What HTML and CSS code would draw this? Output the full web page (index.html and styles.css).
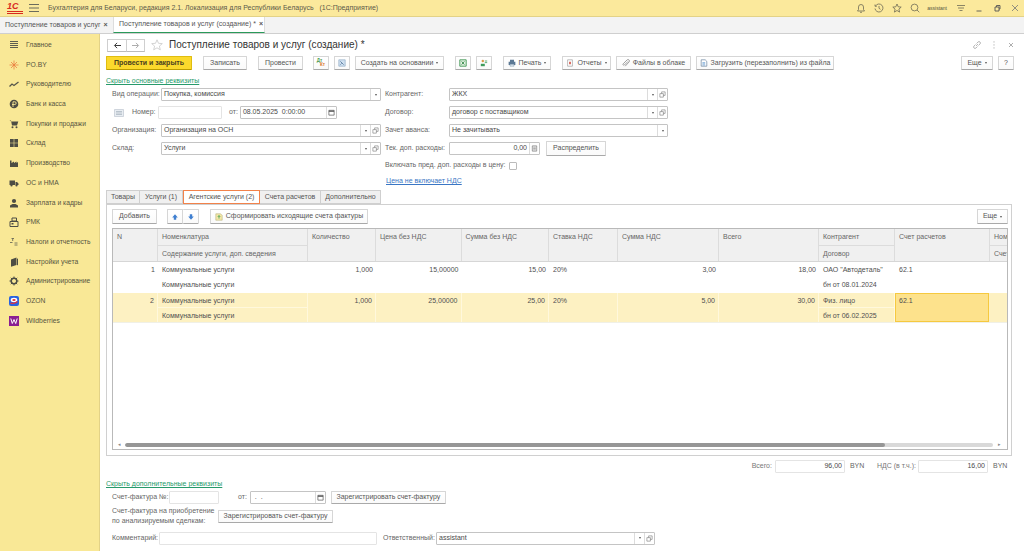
FILE: index.html
```html
<!DOCTYPE html>
<html lang="ru">
<head>
<meta charset="utf-8">
<title>Поступление товаров и услуг (создание)</title>
<link rel="stylesheet" href="styles.css">
</head>
<body>
<div class="app">
  <header class="topbar">
    <span class="logo">1С</span>
    <svg class="ic burger" viewBox="0 0 10 8"><path d="M0 .5h10M0 4h10M0 7.500h10" stroke="#6b6b5c"/></svg>
    <span class="apptitle">Бухгалтерия для Беларуси, редакция 2.1. Локализация для Республики Беларусь &nbsp; (1С:Предприятие)</span>
    <div class="topright">
      <svg class="ic" viewBox="0 0 10 10"><path d="M1.500 8h7L7.500 6.500V4a2.500 2.500 0 0 0-5 0v2.500zM4 9.300h2" fill="none" stroke="#6e6b55" stroke-width=".8"/></svg>
      <svg class="ic" viewBox="0 0 10 10"><path d="M1.500 3A4 4 0 1 1 1 5.500M1 1.500V3.300h1.800M5 3v2.300l1.500 1" fill="none" stroke="#6e6b55" stroke-width=".8"/></svg>
      <svg class="ic" viewBox="0 0 10 10"><path d="M5 1l1.200 2.800 3 .3-2.300 2 .7 3L5 7.500 2.400 9.100l.7-3-2.300-2 3-.3z" fill="none" stroke="#6e6b55" stroke-width=".8"/></svg>
      <svg class="ic" viewBox="0 0 10 10"><circle cx="4.500" cy="4.500" r="3.400" fill="none" stroke="#6e6b55" stroke-width=".8"/><path d="M7 7l2.300 2.300" stroke="#6e6b55" stroke-width=".8"/></svg>
      <span class="user">assistant</span>
      <svg class="ic" viewBox="0 0 10 10"><path d="M1 2.500h8M2 5h6M3.500 7.500h3" stroke="#6e6b55" stroke-width=".8"/></svg>
      <svg class="ic" viewBox="0 0 10 10"><path d="M2.500 8h5" stroke="#555" stroke-width=".9"/></svg>
      <svg class="ic" viewBox="0 0 10 10"><path d="M3 4h4v4H3zM4.500 4V2.500h3.500V6H7" fill="none" stroke="#555" stroke-width=".9"/></svg>
      <svg class="ic" viewBox="0 0 10 10"><path d="M2 2l6 6M8 2l-6 6" stroke="#777" stroke-width=".8"/></svg>
    </div>
  </header>

  <nav class="opentabs">
    <div class="otab">Поступление товаров и услуг<b class="otx">×</b></div>
    <div class="otab cur">Поступление товаров и услуг (создание) *<b class="otx">×</b></div>
  </nav>

  <div class="body">
    <aside class="side">
      <a class="si"><svg class="sic" viewBox="0 0 10 10"><path d="M1 1.500h8M1 3.500h8M1 5.500h8M1 7.500h8" stroke="#5d5d50" stroke-width="1.200"/></svg>Главное</a>
      <a class="si"><svg class="sic" viewBox="0 0 10 10"><path d="M5 .5v9M.5 5h9M2 2l6 6M8 2L2 8" stroke="#e8763a" stroke-width=".7"/></svg>PO.BY</a>
      <a class="si"><svg class="sic" viewBox="0 0 10 10"><path d="M.5 7.500L3 5l2 1.500L9.500 3" fill="none" stroke="#55554a" stroke-width="1.300"/></svg>Руководителю</a>
      <a class="si"><svg class="sic" viewBox="0 0 10 10"><circle cx="5" cy="5" r="4.300" fill="#4d4d44"/><path d="M4 8V2.800h1.800a1.300 1.300 0 0 1 0 2.700H3" fill="none" stroke="#f9e896" stroke-width=".9"/></svg>Банк и касса</a>
      <a class="si"><svg class="sic" viewBox="0 0 10 10"><path d="M.5 1.500h1.500l1 5h5l1.300-4H2.300z" fill="#4d4d44"/><circle cx="3.500" cy="8.300" r="1" fill="#4d4d44"/><circle cx="7.500" cy="8.300" r="1" fill="#4d4d44"/></svg>Покупки и продажи</a>
      <a class="si"><svg class="sic" viewBox="0 0 10 10"><path d="M1 1h3.700v3.700H1zM5.300 1H9v3.700H5.300zM1 5.300h3.700V9H1zM5.300 5.300H9V9H5.300z" fill="#4d4d44"/></svg>Склад</a>
      <a class="si"><svg class="sic" viewBox="0 0 10 10"><path d="M1 9V2.500h1.500V5L5 3.500V5l2.500-1.500V5L9 4v5z" fill="#4d4d44"/></svg>Производство</a>
      <a class="si"><svg class="sic" viewBox="0 0 10 10"><path d="M.5 2.500h5.500v4.500H.5zM6.500 4H8l1.500 1.500V7h-3z" fill="#4d4d44"/><circle cx="2.500" cy="7.500" r="1.100" fill="#4d4d44"/><circle cx="7.500" cy="7.500" r="1.100" fill="#4d4d44"/></svg>ОС и НМА</a>
      <a class="si"><svg class="sic" viewBox="0 0 10 10"><circle cx="5" cy="3" r="2.100" fill="#4d4d44"/><path d="M1 9.500V7.500L3.500 6h3L9 7.500v2z" fill="#4d4d44"/></svg>Зарплата и кадры</a>
      <a class="si"><svg class="sic" viewBox="0 0 10 10"><path d="M1 4.500h8v5H1zM3 1h4.500v3H3z" fill="none" stroke="#4d4d44" stroke-width="1"/><path d="M2.500 6h2v1.500h-2z" fill="#4d4d44"/></svg>РМК</a>
      <a class="si"><svg class="sic" viewBox="0 0 10 10"><path d="M2.500 1.500h2.500M3.700 1.500v2.500M5.500 6h3M5.500 8h3M1 5.500h2.500" stroke="#5d5d50" stroke-width=".8"/></svg>Налоги и отчетность</a>
      <a class="si"><svg class="sic" viewBox="0 0 10 10"><path d="M2 2.500L7.500 .5V8L2 9.800zM8 1.500l1 .3v6l-1 .7z" fill="#4d4d44"/></svg>Настройки учета</a>
      <a class="si"><svg class="sic" viewBox="0 0 10 10"><circle cx="5" cy="5" r="2.800" fill="none" stroke="#4d4d44" stroke-width="1.500"/><path d="M5 .5v2M5 7.500v2M.5 5h2M7.500 5h2M1.800 1.800l1.400 1.400M6.800 6.800l1.400 1.400M8.200 1.800L6.800 3.200M3.200 6.800L1.800 8.200" stroke="#4d4d44" stroke-width="1"/></svg>Администрирование</a>
      <a class="si"><svg class="sic" viewBox="0 0 10 10"><rect width="10" height="10" rx="2" fill="#2a62e0"/><ellipse cx="5" cy="4" rx="3.300" ry="2.200" fill="#fff"/><path d="M1.500 6.800Q5 8.500 8.500 5.500" fill="none" stroke="#e0323c" stroke-width="1.400"/><ellipse cx="5" cy="4" rx="1.700" ry=".9" fill="#e0323c"/></svg>OZON</a>
      <a class="si"><svg class="sic" viewBox="0 0 10 10"><rect width="10" height="10" fill="#8a1f92"/><path d="M1.800 2.500L3.300 7.500 5 3.500 6.700 7.500 8.200 2.500" fill="none" stroke="#fff" stroke-width="1"/></svg>Wildberries</a>
    </aside>

    <main class="main">
      <div class="headrow">
        <div class="navbtns">
          <span class="navb"><svg class="ic8" viewBox="0 0 10 8"><path d="M9 4H2M4.500 1L1.500 4l3 3" fill="none" stroke="#333" stroke-width="1.100"/></svg></span>
          <span class="navb"><svg class="ic8" viewBox="0 0 10 8"><path d="M1 4h7M5.500 1l3 3-3 3" fill="none" stroke="#aaa" stroke-width="1.100"/></svg></span>
        </div>
        <svg class="star" viewBox="0 0 12 12"><path d="M6 .8l1.500 3.500 3.800.3-2.900 2.500.9 3.700L6 8.800l-3.300 2 .9-3.700L.7 4.600l3.800-.3z" fill="#fff" stroke="#c9c9c9" stroke-width=".8"/></svg>
        <h1 class="title">Поступление товаров и услуг (создание) *</h1>
        <div class="headicons">
          <svg class="ic" viewBox="0 0 10 10"><path d="M4 6l2-2M3.500 4.500L2 6a1.400 1.400 0 0 0 2 2l1.500-1.500M4.500 3.500L6 2a1.400 1.400 0 0 1 2 2L6.500 5.500" fill="none" stroke="#999" stroke-width=".7"/></svg>
          <svg class="ic" viewBox="0 0 10 10"><path d="M5 1.500v.9M5 4.500v.9M5 7.500v.9" stroke="#888" stroke-width=".9"/></svg>
          <svg class="ic" viewBox="0 0 10 10"><path d="M3 3l4 4M7 3L3 7" stroke="#999" stroke-width=".8"/></svg>
        </div>
      </div>

      <div class="toolbar">
        <button class="btn primary w86">Провести и закрыть</button>
        <button class="btn w44 g11">Записать</button>
        <button class="btn w45 g11">Провести</button>
        <button class="btn w16 g10"><span class="dtkt"><i>Дт</i><b>Кт</b></span></button>
        <button class="btn w16 g5"><svg class="ic" viewBox="0 0 10 10"><path d="M1 1h8v8H1z" fill="#cfe0f0" stroke="#7d9cbc" stroke-width=".7"/><path d="M3 3l4 4M3 7l1.500-1.500" stroke="#4a6d94"/></svg></button>
        <button class="btn w89 g5">Создать на основании<span class="caret"></span></button>
        <button class="btn w16 g11"><svg class="ic" viewBox="0 0 10 10"><path d="M1 1h8v8H1z" fill="#e4f3e4" stroke="#2d8a42"/><path d="M3.300 3l3.400 4M6.700 3L3.300 7" stroke="#1e7a35"/></svg></button>
        <button class="btn w16 g5"><svg class="ic" viewBox="0 0 10 10"><circle cx="3.500" cy="2.500" r="1.500" fill="#d69a4a"/><path d="M1 9V6h5v3z" fill="#3d9b5c"/><path d="M6 2.500h3M6 4.500h3" stroke="#3d9b5c"/></svg></button>
        <button class="btn w48 g11"><svg class="ic" viewBox="0 0 10 10"><path d="M2.500 1h5v2.500h-5zM.8 3.500h8.400v4H.8z" fill="#5b7894"/><path d="M2.500 6.500h5V9h-5z" fill="#dfe7ef" stroke="#5b7894" stroke-width=".5"/></svg>Печать<span class="caret"></span></button>
        <button class="btn w49 g11"><svg class="ic" viewBox="0 0 10 10"><path d="M2 1h6v8H2z" fill="#fff" stroke="#8a8a8a" stroke-width=".7"/><path d="M4 3.500h2v3H4z" fill="#d24a3c"/></svg>Отчеты<span class="caret"></span></button>
        <button class="btn w75 g5"><svg class="ic" viewBox="0 0 10 10"><path d="M7.500 2.500L3 7a1 1 0 0 1-1.500-1.500l5-5a1.800 1.800 0 0 1 2.500 2.500L4 8.500" fill="none" stroke="#888" stroke-width="1" transform="translate(0 .5)"/></svg>Файлы в облаке</button>
        <button class="btn w138 g5"><svg class="ic" viewBox="0 0 10 10"><path d="M1.500 1h5l2 2v6h-7z" fill="#fff" stroke="#5b7894" stroke-width=".8"/><path d="M3 4.500h3.500M3 6h3.500M3 7.500h3.500" stroke="#3a7fc4" stroke-width=".7"/></svg>Загрузить (перезаполнить) из файла</button>
        <button class="btn w32 push">Еще<span class="caret"></span></button>
        <button class="btn w16 g5">?</button>
      </div>

      <a class="link green hide1">Скрыть основные реквизиты</a>

      <section class="form">
        <div class="col left">
          <div class="row"><label class="lab w49">Вид операции:</label><div class="field grow"><span class="val">Покупка, комиссия</span><span class="fb"><span class="caret"></span></span></div></div>
          <div class="row">
            <svg class="docic" viewBox="0 0 10 8"><path d="M.5.500h9v7h-9z" fill="#e8edf2" stroke="#b5bfc9" stroke-width=".6"/><path d="M2 2.500h6M2 4h6M2 5.500h6" stroke="#9aa7b4" stroke-width=".6"/></svg>
            <label class="lab w26">Номер:</label><div class="field plain w64"></div>
            <label class="lab from">от:</label>
            <div class="field w97"><span class="val">08.05.2025 &nbsp;0:00:00</span><span class="fb"><svg class="ic7" viewBox="0 0 8 8"><path d="M1 1.500h6V7H1z" fill="none" stroke="#555" stroke-width=".8"/><path d="M1 2.500h6" stroke="#555" stroke-width="1.400"/></svg></span></div>
          </div>
          <div class="row"><label class="lab w49">Организация:</label><div class="field grow"><span class="val">Организация на ОСН</span><span class="fb"><span class="caret"></span></span><span class="fb"><svg class="ic7" viewBox="0 0 8 8"><path d="M1 3h4v4H1zM3 3V1h4v4H5" fill="none" stroke="#777" stroke-width=".7"/></svg></span></div></div>
          <div class="row"><label class="lab w49">Склад:</label><div class="field grow"><span class="val">Услуги</span><span class="fb"><span class="caret"></span></span><span class="fb"><svg class="ic7" viewBox="0 0 8 8"><path d="M1 3h4v4H1zM3 3V1h4v4H5" fill="none" stroke="#777" stroke-width=".7"/></svg></span></div></div>
        </div>
        <div class="col right">
          <div class="row"><label class="lab w64">Контрагент:</label><div class="field grow"><span class="val">ЖКХ</span><span class="fb"><span class="caret"></span></span><span class="fb"><svg class="ic7" viewBox="0 0 8 8"><path d="M1 3h4v4H1zM3 3V1h4v4H5" fill="none" stroke="#777" stroke-width=".7"/></svg></span></div></div>
          <div class="row"><label class="lab w64">Договор:</label><div class="field grow"><span class="val">договор с поставщиком</span><span class="fb"><span class="caret"></span></span><span class="fb"><svg class="ic7" viewBox="0 0 8 8"><path d="M1 3h4v4H1zM3 3V1h4v4H5" fill="none" stroke="#777" stroke-width=".7"/></svg></span></div></div>
          <div class="row"><label class="lab w64">Зачет аванса:</label><div class="field grow"><span class="val">Не зачитывать</span><span class="fb"><span class="caret"></span></span></div></div>
          <div class="row"><label class="lab w64">Тек. доп. расходы:</label><div class="field w91"><span class="val num">0,00</span><span class="fb"><svg class="ic7" viewBox="0 0 8 8"><path d="M1.500 1h5v6h-5z" fill="none" stroke="#666" stroke-width=".7"/><path d="M2.500 2.500h3M2.500 4h3M2.500 5.500h3" stroke="#666" stroke-width=".6"/></svg></span></div><button class="btn w60 dist">Распределить</button></div>
          <div class="row short"><label class="lab">Включать пред. доп. расходы в цену:</label><span class="check"></span></div>
          <div class="row short"><a class="link blue">Цена не включает НДС</a></div>
        </div>
      </section>

      <div class="tabs">
        <span class="tab w34">Товары</span>
        <span class="tab w43">Услуги (1)</span>
        <span class="tab active w77">Агентские услуги (2)</span>
        <span class="tab w61">Счета расчетов</span>
        <span class="tab w60">Дополнительно</span>
      </div>

      <section class="panel">
        <div class="ptools">
          <button class="btn w45">Добавить</button>
          <div class="pair g10">
            <button class="btn w16a"><svg class="ic" viewBox="0 0 10 10"><path d="M5 1.500L8.500 5.500H6.500V8.500h-3V5.500H1.500z" fill="#3f7fd0"/></svg></button>
            <button class="btn w16a"><svg class="ic" viewBox="0 0 10 10"><path d="M5 8.500L8.500 4.500H6.500V1.500h-3v3H1.500z" fill="#3f7fd0"/></svg></button>
          </div>
          <button class="btn w158 g11"><svg class="ic" viewBox="0 0 10 10"><path d="M1 1h6l2 2v6H1z" fill="#f4e8a8" stroke="#a8a26a" stroke-width=".6"/><path d="M5 7V4M3.500 5L5 3l1.500 2" fill="none" stroke="#3e9a4c"/></svg>Сформировать исходящие счета фактуры</button>
          <button class="btn w31 push">Еще<span class="caret"></span></button>
        </div>

        <div class="grid">
          <div class="gr head">
            <div class="c"><span class="l">N</span></div>
            <div class="c split"><span class="l">Номенклатура</span><span class="l">Содержание услуги, доп. сведения</span></div>
            <div class="c"><span class="l">Количество</span></div>
            <div class="c"><span class="l">Цена без НДС</span></div>
            <div class="c"><span class="l">Сумма без НДС</span></div>
            <div class="c"><span class="l">Ставка НДС</span></div>
            <div class="c"><span class="l">Сумма НДС</span></div>
            <div class="c"><span class="l">Всего</span></div>
            <div class="c split"><span class="l">Контрагент</span><span class="l">Договор</span></div>
            <div class="c"><span class="l">Счет расчетов</span></div>
            <div class="c split"><span class="l">Номер</span><span class="l">Счет</span></div>
          </div>
          <div class="gr data">
            <div class="c r"><span class="l">1</span></div>
            <div class="c"><span class="l">Коммунальные услуги</span><span class="l">Коммунальные услуги</span></div>
            <div class="c r"><span class="l">1,000</span></div>
            <div class="c r"><span class="l">15,00000</span></div>
            <div class="c r"><span class="l">15,00</span></div>
            <div class="c"><span class="l">20%</span></div>
            <div class="c r"><span class="l">3,00</span></div>
            <div class="c r"><span class="l">18,00</span></div>
            <div class="c"><span class="l">ОАО "Автодеталь"</span><span class="l">бн от 08.01.2024</span></div>
            <div class="c"><span class="l">62.1</span></div>
            <div class="c"></div>
          </div>
          <div class="gr data sel">
            <div class="c r"><span class="l">2</span></div>
            <div class="c split"><span class="l">Коммунальные услуги</span><span class="l">Коммунальные услуги</span></div>
            <div class="c r"><span class="l">1,000</span></div>
            <div class="c r"><span class="l">25,00000</span></div>
            <div class="c r"><span class="l">25,00</span></div>
            <div class="c"><span class="l">20%</span></div>
            <div class="c r"><span class="l">5,00</span></div>
            <div class="c r"><span class="l">30,00</span></div>
            <div class="c split"><span class="l">Физ. лицо</span><span class="l">бн от 06.02.2025</span></div>
            <div class="c cur"><span class="l">62.1</span></div>
            <div class="c split"></div>
          </div>
          <div class="gridfill"></div>
          <div class="hscroll">
            <span class="arrow">◂</span>
            <span class="track"><span class="thumb"></span></span>
            <span class="arrow">▸</span>
          </div>
        </div>
      </section>

      <div class="totals">
        <label class="lab">Всего:</label><div class="field plain w70"><span class="val num">96,00</span></div><span class="cur-code">BYN</span>
        <label class="lab vat">НДС (в т.ч.):</label><div class="field plain w70"><span class="val num">16,00</span></div><span class="cur-code">BYN</span>
      </div>

      <a class="link green hide2">Скрыть дополнительные реквизиты</a>

      <div class="frow r1">
        <label class="lab w57">Счет-фактура №:</label><div class="field plain w50"></div>
        <label class="lab from2">от:</label>
        <div class="field w76"><span class="val">&nbsp;. &nbsp;.</span><span class="fb"><svg class="ic7" viewBox="0 0 8 8"><path d="M1 1.500h6V7H1z" fill="none" stroke="#555" stroke-width=".8"/><path d="M1 2.500h6" stroke="#555" stroke-width="1.400"/></svg></span></div>
        <button class="btn w115 g5">Зарегистрировать счет-фактуру</button>
      </div>
      <div class="frow r2">
        <label class="lab w106">Счет-фактура на приобретение<br>по анализируемым сделкам:</label>
        <button class="btn w115">Зарегистрировать счет-фактуру</button>
      </div>
      <div class="frow r3">
        <label class="lab w47">Комментарий:</label><div class="field plain w218"></div>
        <label class="lab resp">Ответственный:</label>
        <div class="field w219"><span class="val">assistant</span><span class="fb"><span class="caret"></span></span><span class="fb"><svg class="ic7" viewBox="0 0 8 8"><path d="M1 3h4v4H1zM3 3V1h4v4H5" fill="none" stroke="#777" stroke-width=".7"/></svg></span></div>
      </div>
    </main>
  </div>
</div>
</body>
</html>
```
FILE: styles.css
```css
* { box-sizing: border-box; }
html, body { margin: 0; height: 100%; }
body { font: 7px/1.2 "Liberation Sans", Arial, sans-serif; color: #4a4a4a; background: #fff; overflow: hidden; }
button { font: inherit; color: #555; }
.app { height: 551px; display: flex; flex-direction: column; overflow: hidden; }

.ic { width: 8px; height: 8px; flex: none; }
.ic7 { width: 7px; height: 7px; display: block; }
.ic8 { width: 9px; height: 7px; display: block; }

.topbar { height: 17px; flex: none; display: flex; align-items: center; background: #fbe99c; border-bottom: 1px solid #e3d287; padding-left: 7px; }
.logo { font: italic bold 9px/9px "Liberation Sans", sans-serif; color: #d8291f; border-bottom: 3px double #d8291f; width: 16px; height: 12px; }
.burger { width: 10px; height: 8px; margin-left: 6px; }
.apptitle { margin-left: 9px; color: #5c5a4a; white-space: nowrap; }
.topright { margin-left: auto; display: flex; align-items: center; padding-right: 4px; }
.topright .ic { width: 10px; height: 10px; margin-left: 8px; }
.user { font-size: 5px; margin-left: 7px; margin-right: 1px; color: #55533f; }

.opentabs { height: 17px; flex: none; display: flex; background: #f3f3f3; border-bottom: 1px solid #cfcfcf; }
.otab { display: flex; align-items: center; padding-left: 5px; width: 113px; color: #555; white-space: nowrap; }
.otx { margin-left: 3px; font-size: 7px; color: #555; }
.otab.cur { width: 152px; background: #fff; padding-left: 5px; border-left: 1px solid #ddd; border-right: 1px solid #ddd; border-bottom: 1px solid #2a9a5a; height: 16px; }

.body { flex: 1; display: flex; min-height: 0; }
.side { width: 100px; flex: none; background: #f9e896; border-right: 1px solid #e3d287; padding-top: 1px; }
.si { display: flex; align-items: center; height: 19.72px; color: #57553f; padding-left: 9px; white-space: nowrap; font-size: 6.75px; }
.sic { width: 10px; height: 10px; margin-right: 7px; flex: none; }

.main { flex: 1; min-width: 0; display: flex; flex-direction: column; padding: 4px 10px 0 6px; }
.headrow { height: 14px; display: flex; align-items: center; }
.navbtns { display: flex; margin-left: 1px; }
.navb { width: 20px; height: 13px; border: 1px solid #cfcfcf; border-bottom-color: #bbb; display: flex; align-items: center; justify-content: center; background: #fff; }
.navb + .navb { margin-left: -1px; width: 19px; }
.star { width: 12px; height: 12px; margin-left: 6px; }
.title { font: 400 10px/14px "Liberation Sans", sans-serif; color: #333; margin: 0 0 0 6px; }
.headicons { margin-left: auto; display: flex; gap: 7px; margin-right: -2px; }
.headicons .ic { width: 10px; height: 10px; }

.toolbar { display: flex; height: 14px; margin-top: 4px; }
.btn { height: 14px; padding: 0; background: linear-gradient(#fff, #fafafa); border: 1px solid #d6d6d6; border-bottom: 1px solid #a9a9a9; border-radius: 1px; display: inline-flex; align-items: center; justify-content: center; gap: 3px; white-space: nowrap; flex: none; }
.primary { background: #fbd92c; border-color: #e0bd10; border-bottom-color: #bb9c00; color: #4a4120; font-weight: 700; }
.w16, .w16a { width: 16px; } .w31 { width: 31px; } .w32 { width: 32px; } .w44 { width: 44px; } .w45 { width: 45px; } .w48 { width: 48px; } .w49 { width: 49px; } .w60 { width: 60px; } .w75 { width: 75px; } .w86 { width: 86px; } .w89 { width: 89px; } .w115 { width: 115px; } .w138 { width: 138px; } .w158 { width: 158px; }
.g5 { margin-left: 5px; } .g10 { margin-left: 10px; } .g11 { margin-left: 11px; }
.push { margin-left: auto; }
.caret { width: 0; height: 0; border: 1.500px solid transparent; border-top: 2px solid #555; border-bottom: 0; flex: none; }
.dtkt { display: flex; flex-direction: column; font-size: 4.500px; line-height: 4.500px; font-weight: 700; }
.dtkt i { font-style: normal; color: #4c9a4c; margin-right: 3px; }
.dtkt b { color: #d9762a; margin-left: 3px; }

.link { text-decoration: underline; white-space: nowrap; display: block; }
.green { color: #279a6b; }
.blue { color: #3a76c4; margin-left: 1px; }
.hide1 { margin-top: 6px; height: 9px; line-height: 9px; }

.form { display: flex; margin-top: 3px; height: 101px; }
.col { display: flex; flex-direction: column; gap: 5px; }
.left { width: 269px; margin-left: 6px; }
.right { width: 283px; margin-left: 4px; }
.row { display: flex; align-items: center; height: 13px; }
.row.short { height: 11px; }
.lab { color: #666; white-space: nowrap; flex: none; }
.w26 { width: 26px; } .w47 { width: 47px; } .w49.lab { width: 49px; } .w57 { width: 57px; } .w64.lab { width: 64px; } .w106 { width: 106px; }
.field { height: 13px; border: 1px solid #c4c4c4; border-radius: 1px; background: #fff; display: flex; align-items: center; flex: none; overflow: hidden; }
.field.plain { border-color: #e4e4e4; }
.grow { flex: 1; min-width: 0; }
.field.w64 { width: 64px; } .w70 { width: 70px; } .w76 { width: 76px; } .w91 { width: 91px; } .w97 { width: 97px; } .w218 { width: 218px; } .w219 { width: 219px; } .w50 { width: 50px; }
.val { flex: 1; padding-left: 2px; color: #4a4a4a; white-space: nowrap; overflow: hidden; }
.num { text-align: right; padding-right: 2px; }
.fb { width: 10px; height: 100%; border-left: 1px solid #dcdcdc; display: flex; align-items: center; justify-content: center; flex: none; }
.docic { width: 10px; height: 8px; margin: 0 8px 0 2px; flex: none; }
.from { margin: 0 2px 0 7px; }
.check { width: 8px; height: 8px; border: 1px solid #bbb; border-radius: 1px; margin-left: 3px; background: #fff; }
.dist { margin-left: 6px; height: 15px; }

.tabs { display: flex; height: 14px; margin-top: 1px; position: relative; z-index: 1; }
.tab { height: 14px; background: #f0f0f0; border: 1px solid #cfcfcf; border-left: 0; display: flex; align-items: center; justify-content: center; color: #555; white-space: nowrap; flex: none; }
.tab:first-child { border-left: 1px solid #cfcfcf; }
.tab.active { background: #fff; border: 1.500px solid #f2824a; color: #555; }
.tab.w34 { width: 34px; } .tab.w43 { width: 43px; } .tab.w77 { width: 77px; } .tab.w61 { width: 61px; } .tab.w60 { width: 60px; }

.panel { height: 252px; border: 1px solid #d0d0d0; display: flex; flex-direction: column; padding: 4px 3px 5px 5px; flex: none; margin-right: 2px; }
.ptools { display: flex; height: 15px; flex: none; }
.ptools .btn { height: 15px; }
.pair { display: flex; }
.pair .btn + .btn { margin-left: 0; border-left: 0; }

.grid { margin-top: 4px; flex: 1; min-height: 0; border: 1px solid #b9b9b9; display: flex; flex-direction: column; overflow: hidden; background: #fff; }
.gr { display: grid; grid-template-columns: 45px 150px 68px 85.500px 87.500px 69px 101px 100px 76px 95px 30px; flex: none; }
.gr.head { height: 33px; background: #f0f0f0; border-bottom: 1px solid #d6d6d6; }
.gr.data { height: 31px; }
.gr.sel { height: 30px; background: #fdf1c2; border-bottom: 1px solid #f0f0e6; }
.c { display: flex; flex-direction: column; min-width: 0; overflow: hidden; }
.head .c { border-right: 1px solid #dcdcdc; }
.sel .c { border-right: 1px solid #fff8dc; }
.l { height: 15px; line-height: 15px; padding: 0 4px; white-space: nowrap; color: #4f4f4f; overflow: hidden; flex: none; }
.head .l { height: 16px; line-height: 16px; color: #666; }
.head .split .l + .l { border-top: 1px solid #dcdcdc; }
.sel .split .l + .l { box-shadow: 0 -1px 0 #fff8dc; }
.r { text-align: right; }
.r .l { padding-right: 3px; }
.c.cur { background: #fde28c; border: 1px solid #f6c93f; margin-right: 1px; }
.c.cur .l { padding-left: 3px; height: 14px; line-height: 14px; }
.gridfill { flex: 1; min-height: 0; }
.hscroll { height: 7px; flex: none; display: flex; align-items: center; gap: 3px; padding: 0 5px 0 3px; margin-bottom: 1px; font-size: 5px; color: #888; }
.arrow { width: 6px; text-align: center; line-height: 7px; flex: none; }
.track { flex: 1; height: 4px; background: #d9d9d9; border-radius: 2px; display: block; overflow: hidden; }
.thumb { display: block; width: 87.500%; height: 100%; background: #969696; border-radius: 2px; }

.totals { display: flex; align-items: center; height: 13px; margin-top: 4px; justify-content: flex-end; margin-right: 7px; }
.totals .lab { margin-right: 3px; color: #777; }
.cur-code { width: 14px; margin-left: 5px; color: #666; }
.vat { margin-left: 13px; margin-right: 2px !important; }

.hide2 { margin-top: 6px; height: 9px; line-height: 9px; }
.frow { display: flex; align-items: center; margin-left: 6px; }
.r1 { height: 14px; margin-top: 2px; }
.r2 { height: 20px; margin-top: 2px; line-height: 10px; }
.r3 { height: 14px; margin-top: 5px; }
.r1 .btn, .r2 .btn { height: 13px; }
.from2 { margin: 0 3px 0 19px; }
.resp { margin-left: 6px; width: 53px; }
```
